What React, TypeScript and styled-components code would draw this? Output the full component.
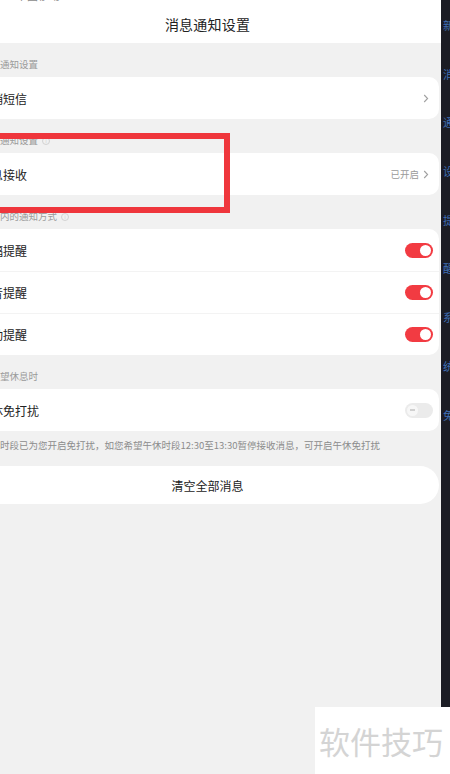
import React from "react";
import styled, { createGlobalStyle } from "styled-components";

const Global = createGlobalStyle`
  html, body { margin: 0; padding: 0; background: #f1f1f1; }
  body { font-family: "Noto Sans CJK SC", "Noto Sans", sans-serif; }
  #root { width: 450px; height: 774px; }
`;

const Page = styled.div`
  position: relative;
  display: flex;
  width: 450px;
  height: 774px;
  overflow: hidden;
`;

const Main = styled.div`
  width: 441px;
  height: 774px;
  overflow: hidden;
  background: #f1f1f1;
  position: relative;
`;

const Screen = styled.div`
  width: 467px;
  margin-left: -26px;
  display: flex;
  flex-direction: column;
`;

const Header = styled.header`
  height: 43px;
  background: #ffffff;
  position: relative;
  overflow: hidden;
  display: flex;
  align-items: center;
  justify-content: center;
`;

const StatusBar = styled.div`
  position: absolute;
  top: -11px;
  left: 0;
  right: 0;
  height: 14px;
  display: flex;
  justify-content: space-between;
  padding: 0 36px 0 42px;
  font-size: 11px;
  line-height: 12px;
  color: #8a8a8a;
`;

const Title = styled.h1`
  margin: 4px 0 0;
  font-size: 14px;
  font-weight: 400;
  color: #222;
  letter-spacing: 0.2px;
`;

const SectionLabel = styled.div`
  display: flex;
  align-items: center;
  padding: 15px 0 6px 7px;
  height: 13px;
  font-size: 9.5px;
  line-height: 13px;
  color: #9a9a9a;
`;

const InfoDot = styled.span`
  display: inline-flex;
  align-items: center;
  justify-content: center;
  width: 6px;
  height: 6px;
  margin-left: 4px;
  border: 1px solid #d2d2d2;
  border-radius: 50%;
  font-size: 4px;
  color: #c8c8c8;
  line-height: 1;
`;

const Card = styled.div`
  margin: 0 2px;
  background: #ffffff;
  border-radius: 10px;
  overflow: hidden;
`;

const Row = styled.div<{ $divider?: boolean }>`
  height: 42px;
  display: flex;
  align-items: center;
  padding: 0 6px 0 3px;
  border-top: ${(p) => (p.$divider ? "1px solid #f3f3f3" : "none")};
  box-sizing: border-box;
`;

const RowText = styled.span`
  flex: 1;
  font-size: 12px;
  color: #222;
  white-space: nowrap;
`;

const Value = styled.span`
  font-size: 9.5px;
  color: #9a9a9a;
  margin-right: 4px;
`;

const Chevron = styled.svg`
  width: 6px;
  height: 9px;
  margin-right: 4px;
`;

const Track = styled.div<{ $on: boolean }>`
  width: 28px;
  height: 15px;
  border-radius: 8px;
  background: ${(p) => (p.$on ? "#f23b42" : "#ebebeb")};
  display: flex;
  align-items: center;
  justify-content: ${(p) => (p.$on ? "flex-end" : "flex-start")};
  padding: 0 2px;
  box-sizing: border-box;
`;

const Knob = styled.div<{ $on: boolean }>`
  width: 11px;
  height: 11px;
  border-radius: 50%;
  background: ${(p) => (p.$on ? "#ffffff" : "#f7f7f7")};
  display: flex;
  align-items: center;
  justify-content: center;
  &::after {
    content: "";
    display: ${(p) => (p.$on ? "none" : "block")};
    width: 5px;
    height: 1.5px;
    background: #d0d0d0;
  }
`;

const Note = styled.div`
  padding: 8px 0 15px 7px;
  height: 12px;
  font-size: 9.5px;
  line-height: 12px;
  color: #8c8c8c;
  white-space: nowrap;
`;

const ClearButton = styled.div`
  margin: 0 2px;
  height: 38px;
  border-radius: 19px;
  background: #ffffff;
  display: flex;
  align-items: center;
  justify-content: center;
  font-size: 12px;
  color: #222;
`;

const Highlight = styled.div`
  position: absolute;
  left: -10px;
  top: 133px;
  width: 240px;
  height: 80px;
  box-sizing: border-box;
  border: 6px solid #ef363c;
`;

const DarkStrip = styled.div`
  flex: 1;
  height: 707px;
  background: #1b1c24;
  overflow: hidden;
  display: flex;
  flex-direction: column;
  padding-top: 19px;
  box-sizing: border-box;
`;

const StripLine = styled.span`
  display: block;
  height: 48.7px;
  padding-left: 2px;
  font-size: 11px;
  line-height: 13px;
  color: #3f6eb3;
  white-space: nowrap;
`;

const Watermark = styled.div`
  position: absolute;
  left: 315px;
  top: 707px;
  width: 135px;
  height: 67px;
  background: #ffffff;
  display: flex;
  align-items: center;
  padding-left: 4px;
  box-sizing: border-box;
  font-size: 31px;
  color: #d4d4d4;
  white-space: nowrap;
`;

const ChevronIcon = () => (
  <Chevron viewBox="0 0 6 9">
    <path d="M1.2 1 L4.6 4.5 L1.2 8" fill="none" stroke="#a0a0a0" strokeWidth="1.1" />
  </Chevron>
);

const Toggle = ({ on }: { on: boolean }) => (
  <Track $on={on}>
    <Knob $on={on} />
  </Track>
);

export default function App() {
  const strip = ["新", "消", "通", "设", "提", "醒", "系", "统", "免"];
  return (
    <>
      <Global />
      <Page>
        <Main>
          <Screen>
            <Header>
              <StatusBar>
                <span>中国移动 4G</span>
                <span>100%</span>
              </StatusBar>
              <Title>消息通知设置</Title>
            </Header>

            <SectionLabel>短信通知设置</SectionLabel>
            <Card>
              <Row>
                <RowText>营销短信</RowText>
                <ChevronIcon />
              </Row>
            </Card>

            <SectionLabel>
              消息通知设置<InfoDot>i</InfoDot>
            </SectionLabel>
            <Card>
              <Row>
                <RowText>消息接收</RowText>
                <Value>已开启</Value>
                <ChevronIcon />
              </Row>
            </Card>

            <SectionLabel>
              应用内的通知方式<InfoDot>i</InfoDot>
            </SectionLabel>
            <Card>
              <Row>
                <RowText>横幅提醒</RowText>
                <Toggle on />
              </Row>
              <Row $divider>
                <RowText>声音提醒</RowText>
                <Toggle on />
              </Row>
              <Row $divider>
                <RowText>震动提醒</RowText>
                <Toggle on />
              </Row>
            </Card>

            <SectionLabel>您希望休息时</SectionLabel>
            <Card>
              <Row>
                <RowText>午休免打扰</RowText>
                <Toggle on={false} />
              </Row>
            </Card>
            <Note>
              夜间时段已为您开启免打扰，如您希望午休时段12:30至13:30暂停接收消息，可开启午休免打扰
            </Note>

            <ClearButton>清空全部消息</ClearButton>
          </Screen>
          <Highlight />
        </Main>
        <DarkStrip>
          {strip.map((c, i) => (
            <StripLine key={i}>{c}</StripLine>
          ))}
        </DarkStrip>
        <Watermark>软件技巧</Watermark>
      </Page>
    </>
  );
}
